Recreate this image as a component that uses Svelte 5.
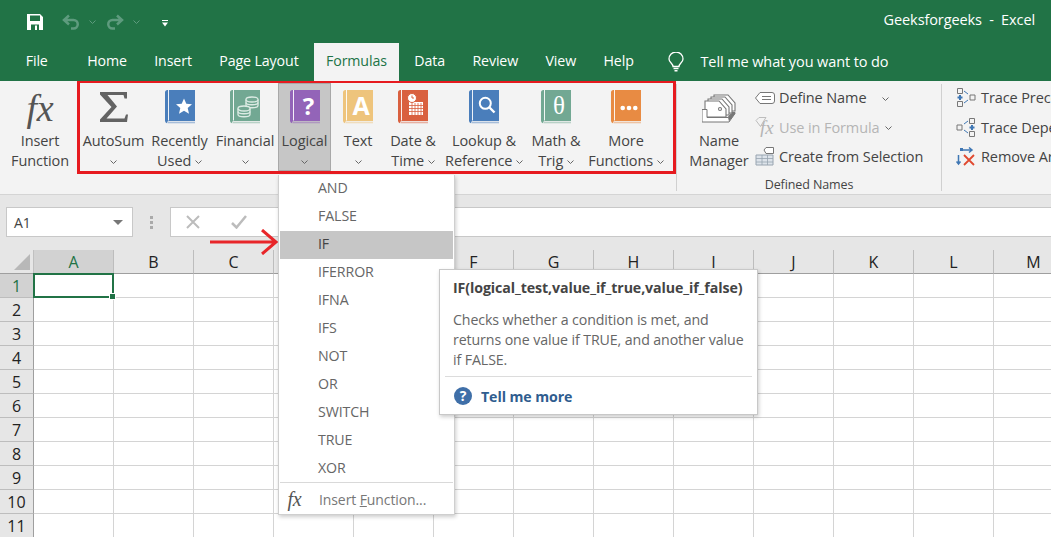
<script>
	const tabs = ['Home', 'Insert', 'Page Layout', 'Formulas', 'Data', 'Review', 'View', 'Help'];

	const funcs = [
		{ id: 'sum', top: 'AutoSum', bottom: '', icon: 'sigma' },
		{ id: 'recent', top: 'Recently', bottom: 'Used', icon: 'star', color: '#4a7ebb' },
		{ id: 'fin', top: 'Financial', bottom: '', icon: 'coins', color: '#72a893' },
		{ id: 'logical', top: 'Logical', bottom: '', icon: 'question', color: '#9364b8' },
		{ id: 'text', top: 'Text', bottom: '', icon: 'letter', color: '#eec47c' },
		{ id: 'date', top: 'Date &', bottom: 'Time', icon: 'calendar', color: '#d9603f' },
		{ id: 'lookup', top: 'Lookup &', bottom: 'Reference', icon: 'search', color: '#4a7ebb' },
		{ id: 'math', top: 'Math &', bottom: 'Trig', icon: 'theta', color: '#72a893' },
		{ id: 'more', top: 'More', bottom: 'Functions', icon: 'dots', color: '#e88b43' }
	];

	const menu = ['AND', 'FALSE', 'IF', 'IFERROR', 'IFNA', 'IFS', 'NOT', 'OR', 'SWITCH', 'TRUE', 'XOR'];
	const columns = ['A', 'B', 'C', 'D', 'E', 'F', 'G', 'H', 'I', 'J', 'K', 'L', 'M'];
	const rows = [1, 2, 3, 4, 5, 6, 7, 8, 9, 10, 11];
</script>

{#snippet chevron()}
	<svg class="chev" viewBox="0 0 7 4" width="7" height="4"><path d="M.5.5 3.5 3.500 6.500.5" fill="none" stroke="#666" /></svg>
{/snippet}

{#snippet book(f)}
	<svg class="icon" viewBox="0 0 30 34" width="30" height="34">
		<path d="M2.500 0H30v31H3.500A1.800 1.800 0 0 0 2 33.200 3 3 0 0 1 0 31V2.500A2.500 2.500 0 0 1 2.500 0Z" fill={f.color} />
		<path d="M3.500 0v30.500" stroke="#fff" stroke-width="1" opacity=".9" />
		<path d="M2.500 32.500H30" stroke={f.color} stroke-width="1.600" opacity=".45" />
		{#if f.icon === 'star'}
			<path d="M19 8.500l2.300 5.300 5.700.5-4.300 3.800 1.300 5.600-5-3-5 3 1.300-5.600-4.300-3.800 5.700-.5Z" fill="#fff" />
		{:else if f.icon === 'coins'}
			<g fill={f.color} stroke="#dcebe4" stroke-width="1.300">
				<path d="M16 9.500v6c0 3 12 3 12 0v-6" />
				<ellipse cx="22" cy="9.500" rx="6" ry="2.500" />
				<path d="M16 12.500c0 3 12 3 12 0" fill="none" />
				<path d="M8 18.500v6c0 3 12 3 12 0v-6" />
				<ellipse cx="14" cy="18.500" rx="6" ry="2.500" />
				<path d="M8 21.500c0 3 12 3 12 0" fill="none" />
			</g>
		{:else if f.icon === 'question'}
			<text x="18.500" y="25" class="glyph bold" font-size="24">?</text>
		{:else if f.icon === 'letter'}
			<text x="18" y="25" class="glyph bold" font-size="25">A</text>
		{:else if f.icon === 'calendar'}
			<path d="M11 12h14v13H11Z" fill="#fff" />
			<path d="M11 15.500h14M11 18.500h14M11 21.500h14M14 13v12M17 13v12M20 13v12M23 13v12" stroke={f.color} stroke-width=".8" />
			<circle cx="14" cy="8" r="4.500" fill="#fff" stroke={f.color} />
			<path d="M14 5.500V8h2" fill="none" stroke={f.color} stroke-width="1" />
		{:else if f.icon === 'search'}
			<circle cx="16.300" cy="13.300" r="5.500" fill="none" stroke="#fff" stroke-width="2" />
			<path d="M20.500 17.500 25.500 22.500" stroke="#fff" stroke-width="2.400" />
		{:else if f.icon === 'theta'}
			<text x="18" y="24" class="glyph serif" font-size="25">θ</text>
		{:else if f.icon === 'dots'}
			<circle cx="11.700" cy="18" r="2.300" fill="#fff" />
			<circle cx="18" cy="18" r="2.300" fill="#fff" />
			<circle cx="24.300" cy="18" r="2.300" fill="#fff" />
		{/if}
	</svg>
{/snippet}

<div class="app">
	<header class="titlebar">
		<div class="qat">
			<svg class="save" viewBox="0 0 16 16" width="16" height="16">
				<path fill="#fff" fill-rule="evenodd" d="M0 0h13l3 3v13H0ZM3 1.500V7h10V1.500ZM4 10.500V16h8v-5.500Z" />
				<path fill="#fff" d="M8 11.500h2V16H8Z" />
			</svg>
			<svg class="undo" viewBox="0 0 18 16" width="18" height="16">
				<path d="M7 1.500 2 6l5 4.500M2 6h9.500a4.200 4.200 0 0 1 0 8.500H9" fill="none" stroke="#5e9b7e" stroke-width="2.500" />
			</svg>
			<svg class="qchev" viewBox="0 0 7 4" width="7" height="4"><path d="M.5.5 3.500 3.500 6.500.5" fill="none" stroke="#5e9b7e" /></svg>
			<svg class="redo" viewBox="0 0 18 16" width="18" height="16">
				<path d="M11 1.500 16 6l-5 4.500M16 6H6.500a4.200 4.200 0 0 0 0 8.500H9" fill="none" stroke="#5e9b7e" stroke-width="2.500" />
			</svg>
			<svg class="qchev" viewBox="0 0 7 4" width="7" height="4"><path d="M.5.5 3.500 3.500 6.500.5" fill="none" stroke="#5e9b7e" /></svg>
			<svg class="custom" viewBox="0 0 6 7" width="6" height="7"><path d="M0 0h6v1H0ZM0 2.500h6L3 6.500Z" fill="#fff" /></svg>
		</div>
		<div class="doc">Geeksforgeeks&nbsp; -&nbsp; Excel</div>
	</header>

	<nav class="tabs">
		<span class="tab file">File</span>
		{#each tabs as tab}
			<span class="tab" class:active={tab === 'Formulas'}>{tab}</span>
		{/each}
		<svg class="bulb" viewBox="0 0 18 20" width="18" height="20">
			<path d="M6 14.500C6 11.500 2 10.500 2 7a7 7 0 0 1 14 0c0 3.500-4 4.500-4 7.500Z" fill="none" stroke="#fff" stroke-width="1.300" />
			<path d="M6.500 16.500h5M7.500 18.800h3" stroke="#fff" stroke-width="1.500" />
		</svg>
		<span class="tell">Tell me what you want to do</span>
	</nav>

	<section class="ribbon">
		<div class="btn insert">
			<span class="fx">fx</span>
			<span class="lbl">Insert</span>
			<span class="lbl">Function</span>
		</div>

		<div class="functions">
			{#each funcs as f}
				<div class="btn" class:pressed={f.id === 'logical'}>
					{#if f.icon === 'sigma'}
						<svg class="icon" viewBox="0 0 30 34" width="30" height="34">
							<path d="M1 2h27v6.500h-2.500L24.500 5H8.500l9.500 11.500L7.500 28.500h18l1.500-4h2L28 32H1v-2.500L12.500 17 1 4.500Z" fill="#636363" />
						</svg>
					{:else}
						{@render book(f)}
					{/if}
					<span class="lbl">{f.top}</span>
					<span class="lbl">
						{#if f.bottom}{f.bottom}&nbsp;{/if}{@render chevron()}
					</span>
				</div>
			{/each}
		</div>

		<div class="group names">
			<div class="group-body">
				<div class="btn manager">
					<svg class="icon" viewBox="0 0 34 30" width="34" height="30">
						<g fill="#fff" stroke="#777" stroke-width="1.100">
							<path d="M12 1h14l7 8v8H12Z" />
							<path d="M9 3h14l7 8v8H9Z" />
							<path d="M6 5h14l7 8v8H6Z" />
							<path d="M3 7h14l7 8v8H3Z" />
							<circle cx="18" cy="15" r="1.500" />
						</g>
						<path d="M0 15.500h5v8h21l4-5h3v1l-6 8.500H0Z" fill="#fff" stroke="#777" />
						<path d="M27 27.500 33 20V19h-3l-4 4.500Z" fill="#777" />
					</svg>
					<span class="lbl">Name</span>
					<span class="lbl">Manager</span>
				</div>
				<ul class="cmds">
					<li>
						<svg viewBox="0 0 20 12" width="20" height="12">
							<path d="M5 .5h12a2.500 2.500 0 0 1 2.500 2.500v6a2.500 2.500 0 0 1-2.500 2.500H5L.5 6Z" fill="#fff" stroke="#777" />
							<path d="M7 4.500h9M7 7.500h9" stroke="#777" />
						</svg>
						<span>Define Name</span>
						<span class="gap">{@render chevron()}</span>
					</li>
					<li class="disabled">
						<svg viewBox="0 0 20 20" width="20" height="20">
							<path d="M1 3.500 4 .5h7l-2 3-3.500 6Z" fill="none" stroke="#bdbdbd" />
							<text x="5" y="17" class="fxsmall">fx</text>
						</svg>
						<span>Use in Formula</span>
						<span class="gap tight">{@render chevron()}</span>
					</li>
					<li>
						<svg viewBox="0 0 20 20" width="20" height="20">
							<path d="M1 8h17v10H1Z" fill="#dde3ea" stroke="#98a4b0" />
							<path d="M1 11.500h17M1 15h17M7 8v10M12.500 8v10" stroke="#98a4b0" stroke-width=".8" />
							<path d="M9 3 11 .5h7.500v6H11Z" fill="#fff" stroke="#777" />
						</svg>
						<span>Create from Selection</span>
					</li>
				</ul>
			</div>
			<div class="group-name">Defined Names</div>
		</div>

		<div class="group trace">
			<ul class="cmds">
				<li>
					<svg viewBox="0 0 20 19" width="20" height="19">
						<path d="M1.500.5h5v5h-5ZM1.500 13.500h5v5h-5ZM14 7h5v5h-5Z" fill="none" stroke="#777" />
						<path d="M4 7v5M1.500 9.500h5" stroke="#3f77b4" stroke-width="2" />
						<path d="M8 3l4 3M8 15l4-3" stroke="#3f77b4" />
					</svg>
					<span>Trace Precedents</span>
				</li>
				<li>
					<svg viewBox="0 0 20 19" width="20" height="19">
						<path d="M1 7h5v5H1ZM13.500.5h5v5h-5ZM13.500 13.500h5v5h-5Z" fill="none" stroke="#777" />
						<path d="M16 7v5M13.500 9.500h5" stroke="#3f77b4" stroke-width="2" />
						<path d="M8 6l4-3M8 12l4 3" stroke="#3f77b4" />
					</svg>
					<span>Trace Dependents</span>
				</li>
				<li>
					<svg viewBox="0 0 20 19" width="20" height="19">
						<path d="M4 3h12M13 .5 16 3l-3 2.500M2.500 8v9M.5 14.500l2 2.500 2-2.500" fill="none" stroke="#3f77b4" stroke-width="1.500" />
						<path d="M4 1h3v3H4Z" fill="#3f77b4" />
						<path d="M8 8l10 10M18 8 8 18" stroke="#e0492f" stroke-width="1.800" />
					</svg>
					<span>Remove Arrows</span>
				</li>
			</ul>
		</div>
	</section>

	<section class="formula">
		<div class="namebox">
			<span>A1</span>
			<i class="caret"></i>
		</div>
		<div class="grip"><i></i><i></i><i></i></div>
		<div class="input">
			<svg class="cancel" viewBox="0 0 14 14" width="14" height="14"><path d="M1 1l12 12M13 1 1 13" stroke="#bcbcbc" stroke-width="2" /></svg>
			<svg class="enter" viewBox="0 0 16 14" width="16" height="14"><path d="M1 8l4.500 4.500L15 1" fill="none" stroke="#bcbcbc" stroke-width="2.500" /></svg>
		</div>
	</section>

	<section class="sheet">
		<div class="corner"><i></i></div>
		{#each columns as c}
			<div class="col" class:sel={c === 'A'}>{c}</div>
		{/each}
		{#each rows as r}
			<div class="row" class:sel={r === 1}>{r}</div>
			{#each columns as c}
				<div class="cell" class:current={r === 1 && c === 'A'}></div>
			{/each}
		{/each}
	</section>

	<svg class="arrow" viewBox="0 0 70 26" width="70" height="26">
		<path d="M0 13h65M52 1 66 13 52 25" fill="none" stroke="#e8262a" stroke-width="3" />
	</svg>

	<div class="dropdown">
		{#each menu as item}
			<div class="item" class:hot={item === 'IF'}>{item}</div>
		{/each}
		<div class="foot">
			<span class="fxmenu">fx</span>
			<span>Insert <u>F</u>unction...</span>
		</div>
	</div>

	<div class="tip">
		<div class="tip-title">IF(logical_test,value_if_true,value_if_false)</div>
		<p>Checks whether a condition is met, and<br />returns one value if TRUE, and another value<br />if FALSE.</p>
		<div class="tip-more">
			<svg viewBox="0 0 18 18" width="18" height="18">
				<circle cx="9" cy="9" r="9" fill="#3f6fa8" />
				<text x="9" y="14" class="glyph bold" font-size="14">?</text>
			</svg>
			<span>Tell me more</span>
		</div>
	</div>
</div>

<style>
	:global(body) {
		margin: 0;
	}
	.app {
		position: relative;
		width: 1051px;
		height: 537px;
		overflow: hidden;
		background: #fff;
		font-family: 'Open Sans', 'Noto Sans', sans-serif;
		font-size: 14px;
		letter-spacing: -0.1px;
		color: #444;
	}

	/* Title bar */
	.titlebar {
		display: flex;
		justify-content: space-between;
		align-items: center;
		height: 43px;
		background: #217346;
		color: #fff;
	}
	.qat {
		display: flex;
		align-items: center;
		padding-left: 27px;
		height: 40px;
	}
	.undo {
		margin-left: 19px;
	}
	.qchev {
		margin-left: 9px;
	}
	.redo {
		margin-left: 10px;
	}
	.custom {
		margin-left: 22px;
		margin-top: 3px;
	}
	.doc {
		padding-right: 16px;
		padding-bottom: 4px;
		font-size: 14.500px;
	}

	/* Tabs */
	.tabs {
		display: flex;
		align-items: center;
		height: 38px;
		padding-left: 12px;
		background: #217346;
		color: #fff;
		font-size: 14.200px;
	}
	.tab {
		padding: 0 13.700px;
		line-height: 36px;
		height: 38px;
	}
	.tab.file {
		margin-right: 12px;
	}
	.tab.active {
		margin: 0 2px;
		padding: 0 11.700px;
		background: #f3f3f3;
		color: #217346;
	}
	.bulb {
		margin-left: 20px;
		margin-right: 15px;
	}
	.tell {
		font-size: 14.500px;
		line-height: 36px;
	}

	/* Ribbon */
	.ribbon {
		display: flex;
		height: 114px;
		box-sizing: border-box;
		padding-left: 8px;
		background: #f3f3f3;
		border-bottom: 1px solid #d4d4d4;
		overflow: hidden;
		font-size: 14.500px;
	}
	.ribbon > * {
		flex: none;
	}
	.btn {
		display: flex;
		flex-direction: column;
		align-items: center;
		white-space: nowrap;
	}
	.lbl {
		height: 20px;
		line-height: 20px;
	}
	.icon {
		display: block;
		flex: none;
		margin-bottom: 7px;
	}
	.chev {
		vertical-align: 2px;
	}
	.insert {
		width: 64px;
		margin-right: 5px;
	}
	.fx {
		height: 34px;
		margin: 10px 0 6px;
		font: italic 38px/34px 'Liberation Serif', serif;
		color: #555;
	}
	.functions {
		display: grid;
		grid-template-columns: 67px 65px 66px 53px 54px 56px 86px 58px 82px;
		box-sizing: border-box;
		width: 599px;
		height: 94px;
		margin-top: -1px;
		border: 3px solid #e61a1f;
		position: relative;
		z-index: 6;
	}
	.functions .btn {
		box-sizing: border-box;
		padding-top: 7px;
		min-width: 0;
	}
	.functions .btn.pressed {
		background: #c6c6c6;
		box-shadow: inset 0 0 0 1px #a8a8a8;
	}
	.glyph {
		fill: #fff;
		text-anchor: middle;
		letter-spacing: 0;
	}
	.bold {
		font-family: 'Open Sans', sans-serif;
		font-weight: 700;
	}
	.serif {
		font-family: 'Liberation Serif', serif;
	}

	.group {
		margin: 5px 0;
		height: 104px;
	}
	.names {
		width: 264px;
		margin-top: 3px;
		height: 107px;
		display: flex;
		flex-direction: column;
		justify-content: space-between;
		border-left: 1px solid #d0d0d0;
		border-right: 1px solid #d0d0d0;
	}
	.group-body {
		display: flex;
	}
	.manager {
		width: 60px;
		margin: 10px 6px 0 12px;
	}
	.cmds {
		list-style: none;
		margin: -1px 0 0;
		padding: 0;
	}
	.cmds li {
		display: flex;
		align-items: center;
		gap: 4px;
		height: 29.500px;
		white-space: nowrap;
	}
	.cmds svg {
		flex: none;
	}
	.cmds .gap {
		margin-left: 12px;
		line-height: 10px;
	}
	.cmds .gap.tight {
		margin-left: 2px;
	}
	.cmds .disabled {
		color: #b5b5b5;
	}
	.fxsmall {
		font: italic 19px 'Liberation Serif', serif;
		fill: #b5b5b5;
	}
	.group-name {
		text-align: center;
		font-size: 12.500px;
		line-height: 20px;
		margin-bottom: -4px;
	}
	.trace {
		margin: 3px 0 0;
		padding-left: 14px;
	}
	.trace .cmds li {
		gap: 5px;
	}

	/* Formula bar */
	.formula {
		display: flex;
		align-items: flex-start;
		height: 55px;
		box-sizing: border-box;
		padding: 12px 0 0 6px;
		background: #e6e6e6;
	}
	.namebox {
		display: flex;
		align-items: center;
		justify-content: space-between;
		box-sizing: border-box;
		width: 127px;
		height: 30px;
		padding: 0 9px 0 7px;
		background: #fff;
		border: 1px solid #c8c8c8;
	}
	.caret {
		border: 5px solid transparent;
		border-top-color: #777;
		border-bottom: 0;
	}
	.grip {
		display: flex;
		flex-direction: column;
		gap: 2px;
		width: 37px;
		align-items: center;
		padding-top: 9px;
	}
	.grip i {
		width: 3px;
		height: 3px;
		background: #aaa;
	}
	.input {
		flex: 1;
		display: flex;
		align-items: center;
		box-sizing: border-box;
		height: 30px;
		padding-left: 15px;
		background: #fff;
		border: 1px solid #c8c8c8;
		border-right: 0;
	}
	.enter {
		margin-left: 31px;
	}

	/* Grid */
	.sheet {
		display: grid;
		grid-template-columns: 34px repeat(13, 80px);
		grid-template-rows: 24px repeat(11, 24px);
		font-size: 16px;
		letter-spacing: 0;
		color: #222;
	}
	.corner {
		position: relative;
		background: #e6e6e6;
		border-right: 1px solid #c0c0c0;
		border-bottom: 1px solid #9f9f9f;
		box-sizing: border-box;
	}
	.corner i {
		position: absolute;
		right: 3px;
		bottom: 3px;
		border-style: solid;
		border-width: 0 0 16px 16px;
		border-color: transparent transparent #b8b8b8 transparent;
	}
	.col {
		display: flex;
		align-items: center;
		justify-content: center;
		box-sizing: border-box;
		background: #e6e6e6;
		border-right: 1px solid #bdbdbd;
		border-bottom: 1px solid #9f9f9f;
	}
	.col.sel {
		background: #d2d2d2;
		color: #217346;
	}
	.row {
		display: flex;
		align-items: center;
		justify-content: center;
		box-sizing: border-box;
		background: #e6e6e6;
		border-right: 1px solid #9f9f9f;
		border-bottom: 1px solid #bdbdbd;
	}
	.row.sel {
		background: #d2d2d2;
		color: #217346;
	}
	.cell {
		box-sizing: border-box;
		border-right: 1px solid #d4d4d4;
		border-bottom: 1px solid #d4d4d4;
	}
	.cell.current {
		position: relative;
	}
	.cell.current::before {
		content: '';
		position: absolute;
		inset: -1px -1px -1px -1px;
		border: 2px solid #217346;
	}
	.cell.current::after {
		content: '';
		position: absolute;
		right: -3px;
		bottom: -3px;
		width: 5px;
		height: 5px;
		background: #217346;
		border: 1px solid #fff;
	}

	/* Overlays */
	.arrow {
		position: absolute;
		left: 210px;
		top: 229px;
		z-index: 4;
	}
	.dropdown {
		position: absolute;
		left: 278px;
		top: 175px;
		z-index: 5;
		box-sizing: border-box;
		width: 177px;
		height: 340px;
		padding: 0 1px;
		background: #fff;
		border: 1px solid #cfcfcf;
		border-top: 0;
		box-shadow: 1px 2px 4px rgba(0, 0, 0, 0.2);
		color: #666;
		font-size: 14.200px;
	}
	.item {
		height: 28px;
		line-height: 26px;
		padding-left: 38px;
	}
	.item.hot {
		background: #c6c6c6;
		color: #444;
	}
	.foot {
		display: flex;
		align-items: center;
		height: 32px;
		border-top: 1px solid #d9d9d9;
		margin-top: -1px;
		color: #777;
		font-size: 14px;
	}
	.fxmenu {
		width: 39px;
		text-align: center;
		margin-left: -5px;
		font: italic 20px 'Liberation Serif', serif;
		color: #555;
	}
	.foot span + span {
		margin-left: 5px;
	}
	.tip {
		position: absolute;
		left: 439px;
		top: 269px;
		z-index: 7;
		box-sizing: border-box;
		width: 319px;
		height: 146px;
		padding: 8px 5px 0;
		background: #fff;
		border: 1px solid #c8c8c8;
		box-shadow: 1px 2px 4px rgba(0, 0, 0, 0.2);
		color: #666;
		font-size: 14.200px;
	}
	.tip-title {
		padding: 0 8px;
		font-weight: 700;
		line-height: 20px;
		color: #444;
	}
	.tip p {
		margin: 12px 0 6px;
		padding: 0 8px;
		line-height: 20px;
	}
	.tip-more {
		display: flex;
		align-items: center;
		gap: 9px;
		height: 38px;
		padding-left: 9px;
		border-top: 1px solid #dcdcdc;
		font-weight: 700;
		color: #2f5d8f;
	}
</style>
